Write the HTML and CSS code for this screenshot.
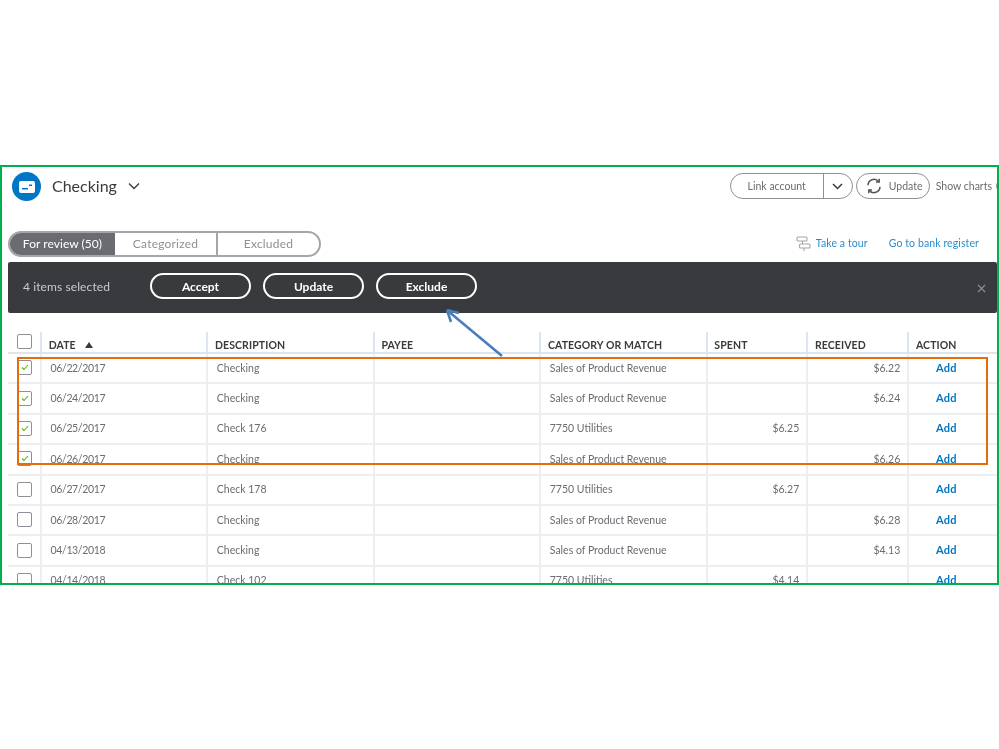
FILE: index.html
```html
<!DOCTYPE html>
<html lang="en">
<head>
<meta charset="utf-8">
<title>Checking</title>
<link rel="stylesheet" href="styles.css">
</head>
<body>
<div class="frame">
  <header class="top">
    <span class="acct-icon">
      <svg width="16" height="12" viewBox="0 0 16 12"><path fill="#fff" fill-rule="evenodd" d="M2 0h12a2 2 0 0 1 2 2v8a2 2 0 0 1-2 2H2a2 2 0 0 1-2-2V2a2 2 0 0 1 2-2zM3 7v1.400h6V7zM10 3.500V5h3V3.500z"/></svg>
    </span>
    <h1 class="acct-name">Checking</h1>
    <svg class="chev" width="12" height="8" viewBox="0 0 12 8"><path d="M1 1.500l5 5 5-5" fill="none" stroke="#393a3d" stroke-width="1.300"/></svg>
    <div class="top-right">
      <div class="split">
        <span class="split-main">Link account</span>
        <span class="split-arrow"><svg width="11" height="7" viewBox="0 0 11 7"><path d="M1 1l4.500 4.500L10 1" fill="none" stroke="#393a3d" stroke-width="1.500"/></svg></span>
      </div>
      <div class="update">
        <svg width="16" height="16" viewBox="0 0 16 16" fill="none" stroke="#53545a" stroke-width="1.500"><path d="M2 7.200A6 6 0 0 1 12.600 3.500"/><path d="M14 8.800A6 6 0 0 1 3.400 12.500"/><path d="M13.200 .8v3.300H10"/><path d="M2.800 15.200v-3.300H6"/></svg>
        <span>Update</span>
      </div>
      <span class="charts">Show charts</span>
      <span class="gear"></span>
    </div>
  </header>

  <div class="tabs-row">
    <div class="tabs">
      <span class="tab tab-on">For review (50)</span>
      <span class="tab tab-mid">Categorized</span>
      <span class="tab tab-end">Excluded</span>
    </div>
    <div class="links">
      <svg class="tour-icon" width="15" height="16" viewBox="0 0 15 16" fill="none" stroke="#a4a6ab" stroke-width="1.100"><rect x="1" y="1" width="10" height="4" rx="1"/><rect x="3.500" y="8" width="10.500" height="4" rx="1"/><path d="M6.500 5v3M8 12v3"/></svg>
      <a class="link link-tour">Take a tour</a>
      <a class="link">Go to bank register</a>
    </div>
  </div>

  <div class="bar">
    <span class="bar-count">4 items selected</span>
    <span class="bar-btn">Accept</span>
    <span class="bar-btn">Update</span>
    <span class="bar-btn">Exclude</span>
    <svg class="bar-close" width="9" height="9" viewBox="0 0 9 9"><path d="M1 1l7 7M8 1l-7 7" stroke="#8d9096" stroke-width="1.100"/></svg>
  </div>

  <div class="table">
    <div class="row head">
      <div class="cell cb"><span class="box"></span></div>
      <div class="cell">DATE<span class="sort"></span></div>
      <div class="cell">DESCRIPTION</div>
      <div class="cell">PAYEE</div>
      <div class="cell">CATEGORY OR MATCH</div>
      <div class="cell">SPENT</div>
      <div class="cell">RECEIVED</div>
      <div class="cell">ACTION</div>
    </div>
    <div class="row">
      <div class="cell cb"><span class="box"><svg width="8" height="7" viewBox="0 0 8 7"><path d="M1 3.500l2 2L7 1" fill="none" stroke="#53b700" stroke-width="1.100"/></svg></span></div>
      <div class="cell date">06/22/2017</div><div class="cell">Checking</div><div class="cell"></div><div class="cell">Sales of Product Revenue</div><div class="cell num"></div><div class="cell num">$6.22</div><div class="cell add">Add</div>
    </div>
    <div class="row">
      <div class="cell cb"><span class="box"><svg width="8" height="7" viewBox="0 0 8 7"><path d="M1 3.500l2 2L7 1" fill="none" stroke="#53b700" stroke-width="1.100"/></svg></span></div>
      <div class="cell date">06/24/2017</div><div class="cell">Checking</div><div class="cell"></div><div class="cell">Sales of Product Revenue</div><div class="cell num"></div><div class="cell num">$6.24</div><div class="cell add">Add</div>
    </div>
    <div class="row">
      <div class="cell cb"><span class="box"><svg width="8" height="7" viewBox="0 0 8 7"><path d="M1 3.500l2 2L7 1" fill="none" stroke="#53b700" stroke-width="1.100"/></svg></span></div>
      <div class="cell date">06/25/2017</div><div class="cell">Check 176</div><div class="cell"></div><div class="cell">7750 Utilities</div><div class="cell num">$6.25</div><div class="cell num"></div><div class="cell add">Add</div>
    </div>
    <div class="row">
      <div class="cell cb"><span class="box"><svg width="8" height="7" viewBox="0 0 8 7"><path d="M1 3.500l2 2L7 1" fill="none" stroke="#53b700" stroke-width="1.100"/></svg></span></div>
      <div class="cell date">06/26/2017</div><div class="cell">Checking</div><div class="cell"></div><div class="cell">Sales of Product Revenue</div><div class="cell num"></div><div class="cell num">$6.26</div><div class="cell add">Add</div>
    </div>
    <div class="row">
      <div class="cell cb"><span class="box"></span></div>
      <div class="cell date">06/27/2017</div><div class="cell">Check 178</div><div class="cell"></div><div class="cell">7750 Utilities</div><div class="cell num">$6.27</div><div class="cell num"></div><div class="cell add">Add</div>
    </div>
    <div class="row">
      <div class="cell cb"><span class="box"></span></div>
      <div class="cell date">06/28/2017</div><div class="cell">Checking</div><div class="cell"></div><div class="cell">Sales of Product Revenue</div><div class="cell num"></div><div class="cell num">$6.28</div><div class="cell add">Add</div>
    </div>
    <div class="row">
      <div class="cell cb"><span class="box"></span></div>
      <div class="cell date">04/13/2018</div><div class="cell">Checking</div><div class="cell"></div><div class="cell">Sales of Product Revenue</div><div class="cell num"></div><div class="cell num">$4.13</div><div class="cell add">Add</div>
    </div>
    <div class="row">
      <div class="cell cb"><span class="box"></span></div>
      <div class="cell date">04/14/2018</div><div class="cell">Check 102</div><div class="cell"></div><div class="cell">7750 Utilities</div><div class="cell num">$4.14</div><div class="cell num"></div><div class="cell add">Add</div>
    </div>
  </div>

  <div class="callout"></div>
  <svg class="arrow" width="64" height="56" viewBox="0 0 64 56" fill="none" stroke="#4a7ebb" stroke-width="2.600"><path d="M57 48L3 3"/><path d="M2 2l12 3M2 2l4 12"/></svg>
</div>
</body>
</html>
```

FILE: styles.css
```css
* { box-sizing: border-box; }
html, body { margin: 0; background: #fff; }
body { padding-top: 165px; height: 749px; overflow: hidden; font-family: Lato, "Open Sans", sans-serif; color: #6b6c72; }

.frame { position: relative; width: 999px; height: 420px; border: 2px solid #00b050; overflow: hidden; background: #fff; filter: blur(.3px); }

.top { display: flex; align-items: center; height: 39px; padding: 5px 0 5px 10px; }
.acct-icon { flex: none; width: 29px; height: 29px; border-radius: 50%; background: #0077c5; display: flex; align-items: center; justify-content: center; }
.acct-name { margin: -2px 0 0 11px; font-size: 16px; font-weight: 400; color: #393a3d; }
.chev { margin-left: 11px; margin-top: -2px; }

.top-right { margin-left: auto; display: flex; align-items: center; margin-right: -13px; margin-top: -1px; flex: none; }
.split { display: flex; width: 123px; height: 26px; border: 1px solid #8d9096; border-radius: 13px; font-size: 10.500px; }
.split-main { width: 93px; display: flex; align-items: center; justify-content: center; border-right: 1px solid #8d9096; }
.split-arrow { flex: 1; display: flex; align-items: center; justify-content: center; }
.update { margin-left: 3px; width: 74px; height: 26px; border: 1px solid #8d9096; border-radius: 13px; display: flex; align-items: center; gap: 7px; padding-left: 9px; font-size: 10.500px; }
.charts { margin-left: 6px; font-size: 10.500px; white-space: nowrap; }
.gear { margin-left: 4px; width: 14px; height: 14px; border: 1px solid #8d9096; border-radius: 50%; flex: none; }

.tabs-row { display: flex; align-items: center; margin-top: 25px; height: 26px; padding-left: 6px; }
.tabs { display: flex; width: 313px; height: 26px; border: 2px solid #a4a6ab; border-radius: 13px; overflow: hidden; font-size: 12px; }
.tab { display: flex; align-items: center; justify-content: center; padding-bottom: 1px; letter-spacing: .2px; color: #8d9096; }
.tab-on { width: 105px; background: #6b6c72; color: #fff; letter-spacing: .05px; }
.tab-mid { width: 103px; border-right: 2px solid #a4a6ab; }
.tab-end { flex: 1; }
.links { margin-left: auto; display: flex; align-items: center; padding: 0 18px 2px 0; font-size: 10.500px; }
.tour-icon { margin-right: 5px; margin-top: 2px; }
.link { color: #0077c5; letter-spacing: .1px; opacity: .85; }
.link-tour { margin-right: 21px; }

.bar { display: flex; align-items: center; height: 51px; margin: 5px 0 0 6px; padding: 0 0 3px 15px; background: #393a3d; border-radius: 2px; font-size: 12px; }
.bar-count { width: 127px; color: #c8cacf; letter-spacing: .1px; }
.bar-btn { width: 101px; height: 26px; margin-right: 12px; border: 2px solid #fff; border-radius: 13px; display: flex; align-items: center; justify-content: center; color: #fff; font-weight: 700; }
.bar-close { margin: 4px 11px 0 auto; }

.table { margin: 19px 0 0 6px; font-size: 10.500px; }
.row { display: grid; grid-template-columns: 32px 166.300px 166.400px 166.600px 166.400px 100.600px 101px 1fr; height: 30.400px; border-bottom: 2px solid #eceef1; }
.cell { display: flex; align-items: center; padding: 0 0 1px 8.500px; border-left: 2px solid #eceef1; white-space: nowrap; }
.cell.cb { border-left: 0; padding-left: 9px; }
.date { letter-spacing: -.35px; }
.box { flex: none; width: 15px; height: 15px; border: 1px solid #8d9096; border-radius: 2px; background: #fff; display: flex; align-items: center; justify-content: center; }
.num { justify-content: flex-end; padding: 0 7px 1px 0; }
.add { padding: 0 0 2px 26.700px; color: #0077c5; font-size: 11px; font-weight: 700; letter-spacing: .3px; }

.head { height: 22px; border-bottom: 2px solid #dfe4ea; }
.head .cell { padding: 6px 0 0 6.700px; color: #393a3d; font-weight: 700; letter-spacing: .1px; border-left-color: #dde5ef; }
.head .cb { padding: 2px 0 0 9px; align-items: flex-start; }
.sort { margin-left: 9px; border-left: 4px solid transparent; border-right: 4px solid transparent; border-bottom: 6px solid #393a3d; }

.callout { position: absolute; left: 15px; top: 190px; width: 971px; height: 108px; border: 2px solid #e46c0a; }
.arrow { position: absolute; left: 443px; top: 141px; }
```
